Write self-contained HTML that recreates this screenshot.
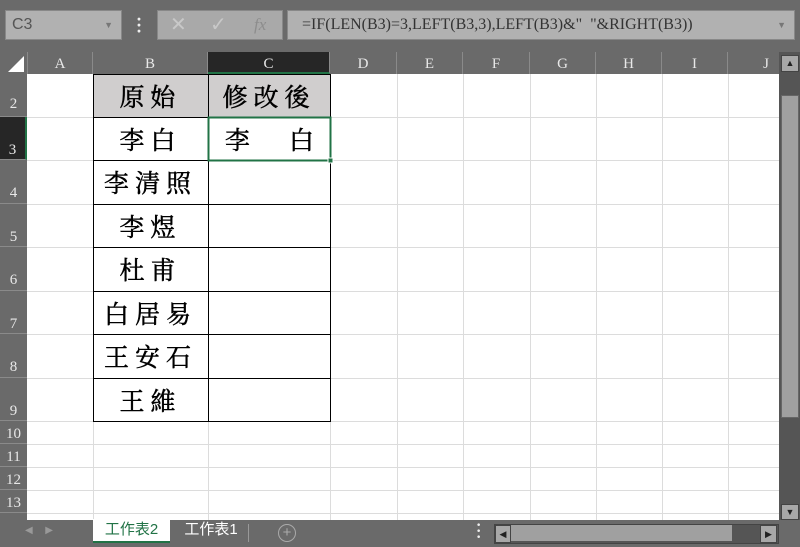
<!DOCTYPE html><html><head><style>
body{margin:0;width:800px;height:547px;background:#6a6a6a;position:relative;overflow:hidden;font-family:"Liberation Serif",serif}
.a{position:absolute}
.hdr{position:absolute;top:52px;height:22px;color:#e8e8e8;font-size:15px;text-align:center;line-height:24px;border-right:1px solid #8a8a8a;box-sizing:border-box}
.rh{position:absolute;left:0;width:27px;color:#e8e8e8;font-size:15px;text-align:center;border-bottom:1px solid #8a8a8a;box-sizing:border-box;font-family:"Liberation Serif",serif}
.cell{position:absolute;font-family:"Liberation Serif","Noto Serif CJK TC","Noto Serif CJK SC",serif;font-size:25px;color:#000;text-align:center;letter-spacing:6px;box-sizing:border-box;-webkit-text-stroke:0.5px #000}
</style></head><body>
<div class="a" style="left:5px;top:10px;width:117px;height:30px;background:#b1b1b1;border:1px solid #888;box-sizing:border-box;font-family:'Liberation Sans',sans-serif;font-size:16px;color:#555;line-height:28px;padding-left:6px">C3<span style="position:absolute;right:8px;top:0;font-size:9px;color:#777">▼</span></div>
<div class="a" style="left:136px;top:16px;width:4px;height:18px;color:#eee;font-size:18px;line-height:6px;font-weight:bold">·<br>·<br>·</div>
<div class="a" style="left:157px;top:10px;width:126px;height:30px;background:#a9a9a9;border:1px solid #888;box-sizing:border-box;color:#c8c8c8;font-size:20px;line-height:28px"><span style="position:absolute;left:12px;font-family:'Liberation Sans'">✕</span><span style="position:absolute;left:52px">✓</span><span style="position:absolute;left:96px;font-style:italic;font-size:17px;color:#8d8d8d">fx</span></div>
<div class="a" style="left:287px;top:10px;width:508px;height:30px;background:#b1b1b1;border:1px solid #888;box-sizing:border-box;font-size:16px;color:#333;line-height:28px;padding-left:14px">=IF(LEN(B3)=3,LEFT(B3,3),LEFT(B3)&amp;"&nbsp; "&amp;RIGHT(B3))<span style="position:absolute;right:8px;top:0;font-size:9px;color:#777">▼</span></div>
<div class="a" style="left:27px;top:74px;width:752px;height:446px;background:#fff"></div>
<svg class="a" style="left:27px;top:74px" width="752" height="446">
<g stroke="#dcdcdc" stroke-width="1">
<line x1="66.5" y1="0" x2="66.5" y2="446"/><line x1="181.5" y1="0" x2="181.5" y2="446"/><line x1="303.5" y1="0" x2="303.5" y2="446"/><line x1="370.5" y1="0" x2="370.5" y2="446"/><line x1="436.5" y1="0" x2="436.5" y2="446"/><line x1="503.5" y1="0" x2="503.5" y2="446"/><line x1="569.5" y1="0" x2="569.5" y2="446"/><line x1="635.5" y1="0" x2="635.5" y2="446"/><line x1="701.5" y1="0" x2="701.5" y2="446"/>
<line x1="0" y1="43.5" x2="752" y2="43.5"/><line x1="0" y1="86.5" x2="752" y2="86.5"/><line x1="0" y1="130.5" x2="752" y2="130.5"/><line x1="0" y1="173.5" x2="752" y2="173.5"/><line x1="0" y1="217.5" x2="752" y2="217.5"/><line x1="0" y1="260.5" x2="752" y2="260.5"/><line x1="0" y1="304.5" x2="752" y2="304.5"/><line x1="0" y1="347.5" x2="752" y2="347.5"/><line x1="0" y1="370.5" x2="752" y2="370.5"/><line x1="0" y1="393.5" x2="752" y2="393.5"/><line x1="0" y1="416.5" x2="752" y2="416.5"/><line x1="0" y1="439.5" x2="752" y2="439.5"/>
</g>
<rect x="66.5" y="0.5" width="237" height="43" fill="#d0cece"/>
<g stroke="#000" stroke-width="1" fill="none">
<rect x="66.5" y="0.5" width="237" height="347"/>
<line x1="181.5" y1="0" x2="181.5" y2="348"/>
<line x1="66" y1="43.5" x2="304" y2="43.5"/><line x1="66" y1="86.5" x2="304" y2="86.5"/><line x1="66" y1="130.5" x2="304" y2="130.5"/><line x1="66" y1="173.5" x2="304" y2="173.5"/><line x1="66" y1="217.5" x2="304" y2="217.5"/><line x1="66" y1="260.5" x2="304" y2="260.5"/><line x1="66" y1="304.5" x2="304" y2="304.5"/>
</g>
<rect x="181.5" y="43.5" width="122" height="43" fill="none" stroke="#217346" stroke-width="2"/>
<rect x="301" y="84" width="5" height="5" fill="#217346" stroke="#fff" stroke-width="1"/>
</svg>
<div class="cell" style="left:93px;top:79px;width:115px;line-height:40px">原始</div>
<div class="cell" style="left:208px;top:79px;width:122px;line-height:40px">修改後</div>
<div class="cell" style="left:93px;top:122px;width:115px;line-height:40px">李白</div>
<div class="cell" style="left:208px;top:122px;width:122px;line-height:40px;letter-spacing:0;text-align:left;padding-left:17px">李<span style="position:absolute;left:81px">白</span></div>
<div class="cell" style="left:93px;top:165px;width:115px;line-height:40px">李清照</div>
<div class="cell" style="left:93px;top:209px;width:115px;line-height:40px">李煜</div>
<div class="cell" style="left:93px;top:252px;width:115px;line-height:40px">杜甫</div>
<div class="cell" style="left:93px;top:296px;width:115px;line-height:40px">白居易</div>
<div class="cell" style="left:93px;top:339px;width:115px;line-height:40px">王安石</div>
<div class="cell" style="left:93px;top:383px;width:115px;line-height:40px">王維</div>
<svg class="a" style="left:8px;top:56px" width="16" height="16"><polygon points="16,0 16,16 0,16" fill="#fff"/></svg>
<div class="hdr" style="left:27px;width:66px;border-left:1px solid #8a8a8a">A</div>
<div class="hdr" style="left:93px;width:115px">B</div>
<div class="hdr" style="left:208px;width:122px;background:#262626;border-bottom:2px solid #217346">C</div>
<div class="hdr" style="left:330px;width:67px">D</div>
<div class="hdr" style="left:397px;width:66px">E</div>
<div class="hdr" style="left:463px;width:67px">F</div>
<div class="hdr" style="left:530px;width:66px">G</div>
<div class="hdr" style="left:596px;width:66px">H</div>
<div class="hdr" style="left:662px;width:66px">I</div>
<div class="hdr" style="left:728px;width:51px;border:0;text-align:right;padding-right:10px">J</div>
<div class="rh" style="top:74px;height:43px;line-height:60px">2</div>
<div class="rh" style="top:117px;height:43px;line-height:66px;background:#262626;border-right:2px solid #217346">3</div>
<div class="rh" style="top:160px;height:44px;line-height:66px">4</div>
<div class="rh" style="top:204px;height:43px;line-height:66px">5</div>
<div class="rh" style="top:247px;height:44px;line-height:66px">6</div>
<div class="rh" style="top:291px;height:43px;line-height:66px">7</div>
<div class="rh" style="top:334px;height:44px;line-height:66px">8</div>
<div class="rh" style="top:378px;height:43px;line-height:66px">9</div>
<div class="rh" style="top:421px;height:23px;line-height:26px">10</div>
<div class="rh" style="top:444px;height:23px;line-height:26px">11</div>
<div class="rh" style="top:467px;height:23px;line-height:26px">12</div>
<div class="rh" style="top:490px;height:23px;line-height:26px">13</div>
<div class="a" style="left:779px;top:52px;width:21px;height:468px;background:#555"></div>
<div class="a" style="left:781px;top:55px;width:16px;height:15px;background:#a8a8a8;border:1px solid #444;color:#222;font-size:9px;text-align:center;line-height:15px">▲</div>
<div class="a" style="left:781px;top:95px;width:16px;height:321px;background:#a0a0a0;border:1px solid #666"></div>
<div class="a" style="left:781px;top:504px;width:16px;height:14px;background:#a8a8a8;border:1px solid #444;color:#222;font-size:9px;text-align:center;line-height:14px">▼</div>
<div class="a" style="left:0;top:520px;width:800px;height:27px;background:#6a6a6a"></div>
<div class="a" style="left:25px;top:525px;color:#999;font-size:10px">◀&nbsp;&nbsp;&nbsp;&nbsp;&nbsp;▶</div>
<div class="a" style="left:93px;top:519px;width:77px;height:22px;background:#fff;border-bottom:2px solid #217346;color:#217346;font-family:'Liberation Sans','Noto Sans CJK TC',sans-serif;font-size:15px;text-align:center;line-height:22px">工作表2</div>
<div class="a" style="left:176px;top:519px;width:70px;height:22px;color:#fff;font-family:'Liberation Sans','Noto Sans CJK TC',sans-serif;font-size:15px;text-align:center;line-height:22px">工作表1</div>
<div class="a" style="left:248px;top:524px;width:1px;height:18px;background:#999"></div>
<div class="a" style="left:278px;top:524px;width:16px;height:16px;border:1px solid #aaa;border-radius:50%;color:#aaa;font-size:15px;text-align:center;line-height:16px;font-family:'Liberation Sans'">+</div>
<div class="a" style="left:476px;top:523px;width:4px;color:#eee;font-size:16px;line-height:6px;font-weight:bold">·<br>·<br>·</div>
<div class="a" style="left:494px;top:524px;width:283px;height:18px;background:#555;border:1px solid #444"></div>
<div class="a" style="left:495px;top:525px;width:14px;height:16px;background:#a8a8a8;border:1px solid #444;font-size:9px;line-height:16px;text-align:center;color:#222">◀</div>
<div class="a" style="left:511px;top:525px;width:221px;height:16px;background:#a0a0a0"></div>
<div class="a" style="left:760px;top:525px;width:15px;height:16px;background:#a8a8a8;border:1px solid #444;font-size:9px;line-height:16px;text-align:center;color:#222">▶</div>
</body></html>
